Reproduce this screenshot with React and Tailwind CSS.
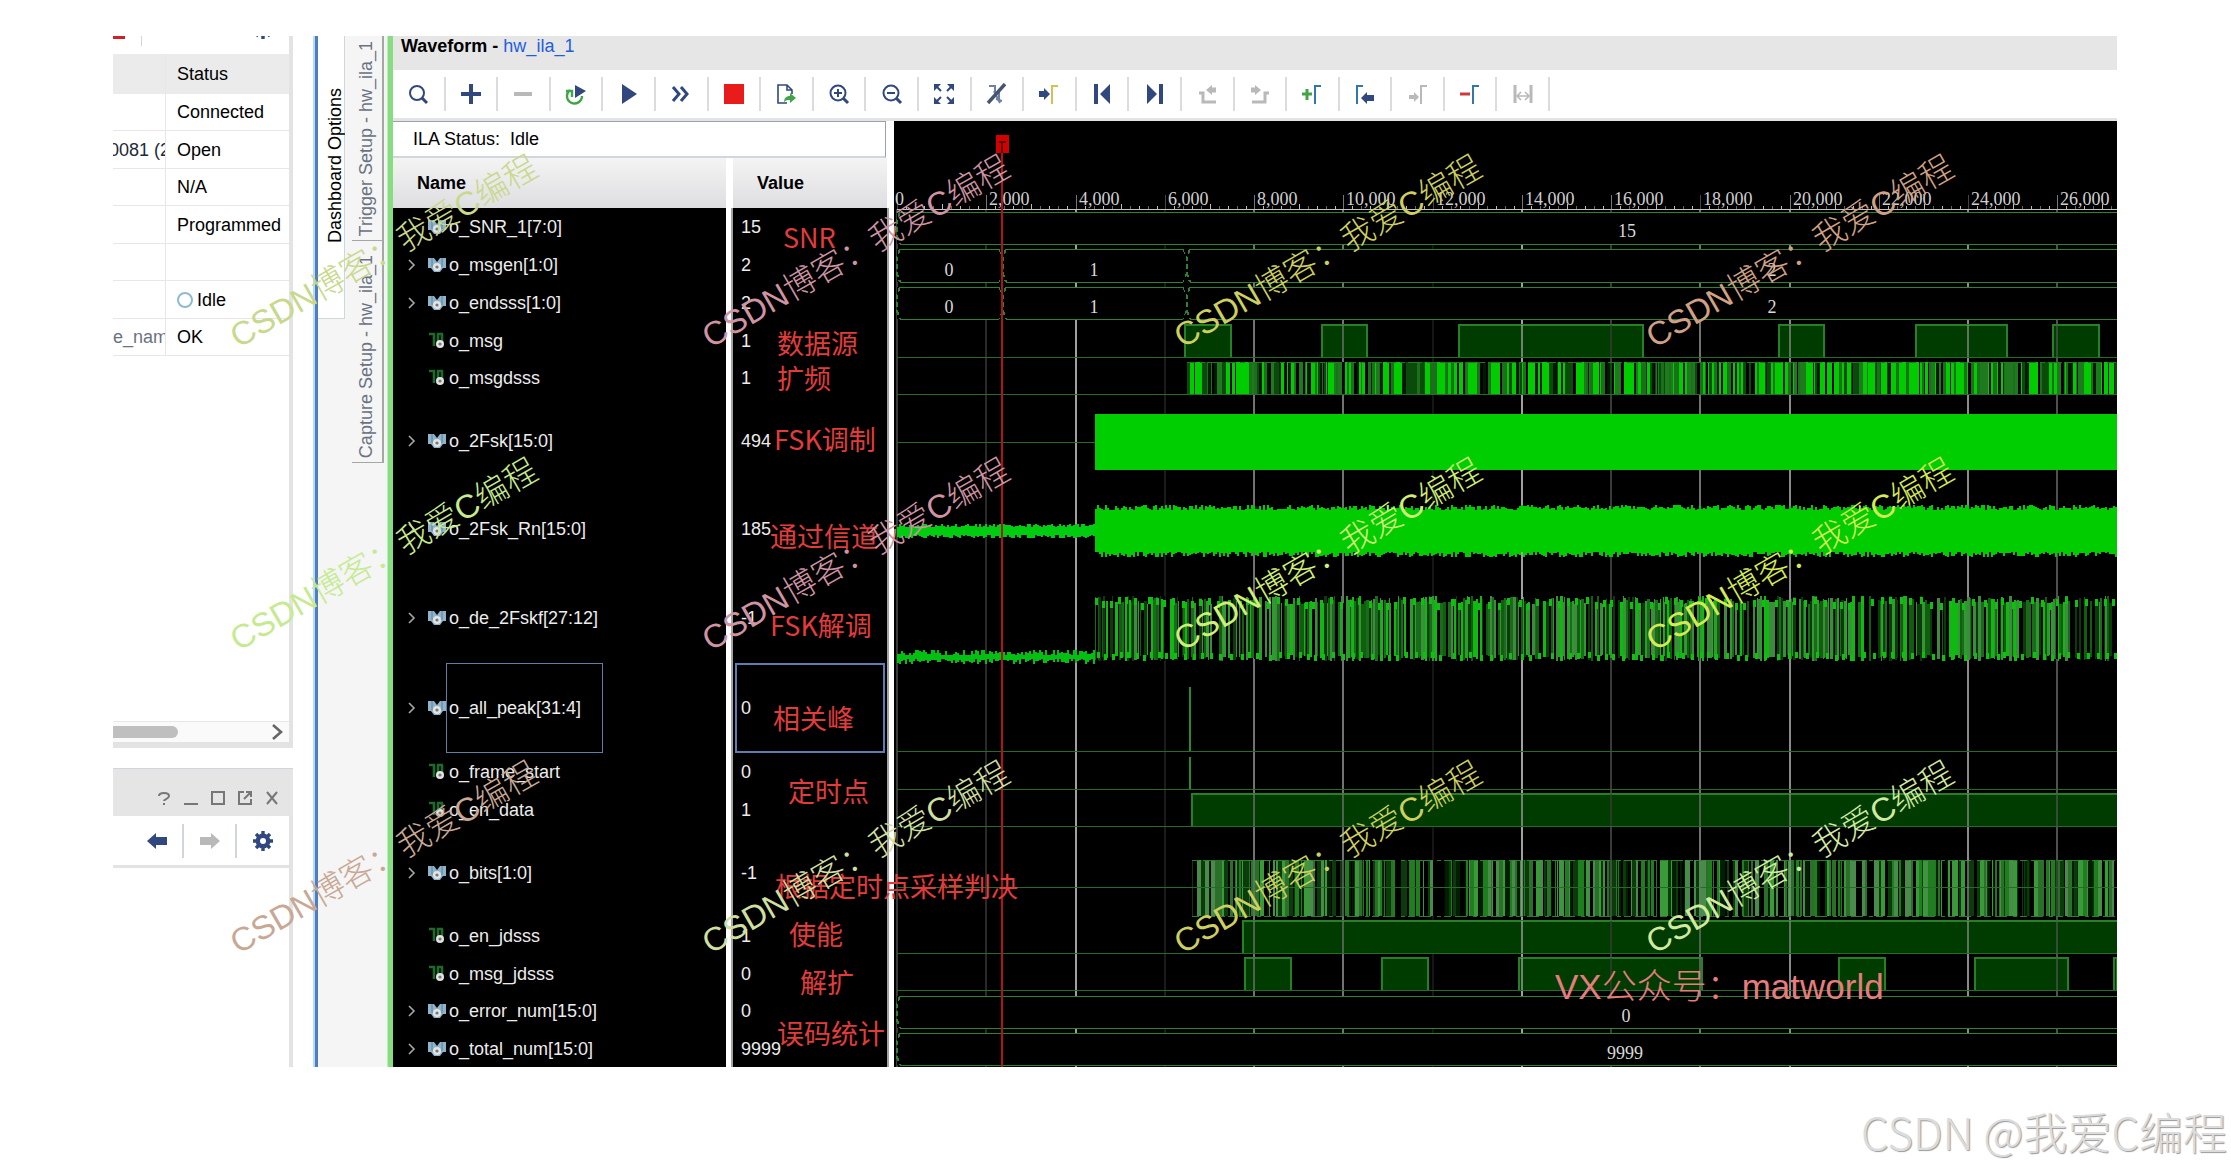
import clsx from "clsx";

const devices = [
  { name: "", status: "Connected" },
  { name: "0081 (2", status: "Open", shift: true },
  { name: "", status: "N/A" },
  { name: "", status: "Programmed" },
  { name: "", status: "" },
  { name: "", status: "Idle", ring: true },
  { name: "e_name", status: "OK" },
];

const signals = [
  { name: "o_SNR_1[7:0]", value: "15", bus: true, height: "h-[38px]" },
  { name: "o_msgen[1:0]", value: "2", bus: true, height: "h-[38px]" },
  { name: "o_endsss[1:0]", value: "2", bus: true, height: "h-[38px]" },
  { name: "o_msg", value: "1", height: "h-[37px]" },
  { name: "o_msgdsss", value: "1", height: "h-[38px]" },
  { name: "o_2Fsk[15:0]", value: "494", bus: true, height: "h-[88px]" },
  { name: "o_2Fsk_Rn[15:0]", value: "185", bus: true, height: "h-[88px]" },
  { name: "o_de_2Fskf[27:12]", value: "-1", bus: true, height: "h-[90px]" },
  { name: "o_all_peak[31:4]", value: "0", bus: true, height: "h-[90px]", selected: true },
  { name: "o_frame_start", value: "0", height: "h-[38px]" },
  { name: "o_en_data", value: "1", height: "h-[38px]" },
  { name: "o_bits[1:0]", value: "-1", bus: true, height: "h-[88px]" },
  { name: "o_en_jdsss", value: "1", height: "h-[38px]" },
  { name: "o_msg_jdsss", value: "0", height: "h-[37px]" },
  { name: "o_error_num[15:0]", value: "0", bus: true, height: "h-[38px]" },
  { name: "o_total_num[15:0]", value: "9999", bus: true, height: "h-[37px]" },
];

// left / vertical centre inside the waveform window
const notes = [
  { text: "SNR", x: 390, y: 201 },
  { text: "数据源", x: 384, y: 307 },
  { text: "扩频", x: 384, y: 342 },
  { text: "FSK调制", x: 381, y: 403 },
  { text: "通过信道", x: 377, y: 500 },
  { text: "FSK解调", x: 377, y: 589 },
  { text: "相关峰", x: 380, y: 682 },
  { text: "定时点", x: 395, y: 755 },
  { text: "根据定时点采样判决", x: 382, y: 850 },
  { text: "使能", x: 396, y: 898 },
  { text: "解扩", x: 407, y: 946 },
  { text: "误码统计", x: 384, y: 997 },
];

const marks = [
  "text-[#c8d88c]", "text-[#cf93a2]", "text-[#cdcf60]", "text-[#d0a184]",
  "text-[#c6ea90]", "text-[#cf93a2]", "text-[#d0ee78]", "text-[#d6ea55]",
  "text-[#c8a894]", "text-[#cfdfa0]", "text-[#cdcf60]", "text-[#d2eaa0]",
];

const NAVY = "#30487e";
const BLUE = "#2f78a8";
const GRAY = "#b9b9b9";
const GREEN = "#3fa548";

const Edge = ({ x = 14, color }) => (
  <path d={`M${x} 21V3h6`} fill="none" stroke={color} strokeWidth="2" />
);

const tools = [
  { label: "Search", icon: <g fill="none" stroke={NAVY} strokeWidth="2"><circle cx="10" cy="10" r="7" /><path d="M15 15l5 5" strokeWidth="3" /></g> },
  { label: "Add", icon: <path d="M11 1v20M1 11h20" stroke={NAVY} strokeWidth="4" /> },
  { label: "Remove", icon: <path d="M2 11h18" stroke={GRAY} strokeWidth="4" /> },
  { label: "Re-trigger", icon: <g><path d="M5 7a7.5 7.5 0 1 0 12 6M1 8h6v6" fill="none" stroke={GREEN} strokeWidth="2.4" /><path d="M10 2l11 6-11 7z" fill={NAVY} /></g> },
  { label: "Run trigger", icon: <path d="M4 1l15 10L4 21z" fill={NAVY} /> },
  { label: "Run immediate", icon: <path d="M3 4l6 7-6 7M11 4l6 7-6 7" fill="none" stroke={NAVY} strokeWidth="3" /> },
  { label: "Stop", icon: <path d="M1 1h20v20H1z" fill="#e91c1c" /> },
  { label: "Export", icon: <g><path d="M12 20H3V2h9l5 5v4M12 2v5h5" fill="none" stroke={NAVY} strokeWidth="1.6" /><path d="M9 20c0-5 2-7 6-7v-3l6 5-6 5v-3c-3 0-5 0-6 3z" fill={GREEN} /></g> },
  { label: "Zoom in", icon: <g fill="none" stroke={NAVY} strokeWidth="2"><circle cx="10" cy="10" r="7.5" /><path d="M6 10h8M10 6v8" /><path d="M15 15l5 5" strokeWidth="3" /></g> },
  { label: "Zoom out", icon: <g fill="none" stroke={NAVY} strokeWidth="2"><circle cx="10" cy="10" r="7.5" /><path d="M6 10h8" /><path d="M15 15l5 5" strokeWidth="3" /></g> },
  { label: "Zoom fit", icon: <g><path d="M3 3l5 5M19 3l-5 5M3 19l5-5M19 19l-5-5" stroke={NAVY} strokeWidth="2" /><path d="M1 1h7L1 8zM21 1h-7l7 7zM1 21h7l-7-7zM21 21h-7l7-7z" fill={NAVY} /></g> },
  { label: "Auto scroll", icon: <g fill="none" stroke="#47546f"><path d="M3 3h6v7M8 8l6 12M10 16l6 2M13 8v9" strokeWidth="2" stroke="#6d80a8" /><path d="M2 20L19 1" strokeWidth="3.4" /></g> },
  { label: "Go to trigger", icon: <g><path d="M1 8h5V5l6 6-6 6v-3H1z" fill={NAVY} /><Edge color="#d6bf54" /></g> },
  { label: "First", icon: <path d="M3 1h4v20H3zM19 1v20L9 11z" fill={NAVY} /> },
  { label: "Last", icon: <path d="M15 1h4v20h-4zM3 1v20l10-10z" fill={NAVY} /> },
  { label: "Previous transition", icon: <g fill="none" stroke={GRAY} strokeWidth="3"><path d="M3 10h4v9h13" /><path d="M20 7h-5" strokeWidth="5" /><path d="M16 2v10l-6-5z" fill={GRAY} stroke="none" /></g> },
  { label: "Next transition", icon: <g fill="none" stroke={GRAY} strokeWidth="3"><path d="M20 10h-4v9H3" /><path d="M2 7h5" strokeWidth="5" /><path d="M6 2v10l6-5z" fill={GRAY} stroke="none" /></g> },
  { label: "Add marker", icon: <g><path d="M6 6v11M1 11h10" stroke={GREEN} strokeWidth="3" /><Edge color={BLUE} /></g> },
  { label: "Previous marker", icon: <g><Edge x={3} color={BLUE} /><path d="M20 18h-7v3l-6-6 6-6v3h7z" fill={NAVY} /></g> },
  { label: "Next marker", icon: <g><path d="M2 12h5V9l5 5-5 5v-3H2z" fill={GRAY} /><Edge color={GRAY} /></g> },
  { label: "Remove marker", icon: <g><path d="M1 11h10" stroke="#cc3b3b" strokeWidth="3" /><Edge color={BLUE} /></g> },
  { label: "Swap markers", icon: <g stroke={GRAY} fill="none"><path d="M3 2v18M19 2v18" strokeWidth="3" /><path d="M5 13h12M9 9l-4 4 4 4M13 9l4 4-4 4" strokeWidth="1.6" /></g> },
];

const Gear = () => (
  <svg className="h-5 w-5" viewBox="0 0 20 20">
    <path d="M10 0v20M0 10h20M3 3l14 14M17 3L3 17" stroke={NAVY} strokeWidth="3.4" />
    <circle cx="10" cy="10" r="7.4" fill={NAVY} />
    <circle cx="10" cy="10" r="3" fill="#fff" />
  </svg>
);

const SignalIcon = ({ bus }) => (
  <svg className="h-[18px] w-[18px] shrink-0" viewBox="0 0 18 18">
    {bus ? (
      <g>
        <path d="M0 2h6l3 4 3-4h6v10h-3l-3 4H6l-3-4H0z" fill="#8fb3cb" />
        <path d="M4 2v9M14 2v9" stroke="#5d8196" strokeWidth="1" />
        <circle cx="9" cy="11" r="4" fill="#e4e4e4" />
        <circle cx="9" cy="11" r="1.6" fill="#777" />
      </g>
    ) : (
      <g>
        <path d="M1 2h5v12M9 2h6M10 2v8M14 2v8" stroke="#1d6b2c" strokeWidth="2.6" fill="none" />
        <circle cx="12" cy="12" r="4" fill="#e4e4e4" />
        <circle cx="12" cy="12" r="1.6" fill="#777" />
      </g>
    )}
  </svg>
);

function HardwarePanel() {
  return (
    <section className="flex h-[712px] flex-col border-r-4 border-b-[6px] border-[#e3e3e3] bg-white">
      <div className="flex h-[18px] items-start overflow-hidden">
        <span className="h-[3px] w-3 bg-[#cf2027]" />
        <span className="ml-4 h-2.5 w-px bg-gray-300" />
        <span className="ml-auto mr-4 flex h-[3px] items-end overflow-hidden"><Gear /></span>
      </div>
      <table className="w-full table-fixed border-separate border-spacing-0 text-left text-[18px] leading-5">
        <thead>
          <tr className="h-10 bg-[#ebebeb]">
            <th className="w-[53px] border-r border-gray-200" aria-label="Name" />
            <th className="pl-[11px] font-normal">Status</th>
          </tr>
        </thead>
        <tbody>
          {devices.map((d, i) => (
            <tr key={i} className={i % 2 ? "h-[38px]" : "h-[37px]"}>
              <td className={clsx("overflow-hidden whitespace-nowrap border-r border-b border-gray-200 p-0", i === 6 ? "text-gray-500" : "text-gray-800")}>
                <span className={clsx("block", d.shift && "-ml-1")}>{d.name}</span>
              </td>
              <td className="whitespace-nowrap border-b border-gray-200 p-0 pl-[11px]">
                <span className="flex items-center gap-1">
                  {d.ring && <span className="h-4 w-4 rounded-full border-2 border-[#8fbccb]" />}
                  {d.status}
                </span>
              </td>
            </tr>
          ))}
        </tbody>
      </table>
      <div className="mt-auto flex h-[21px] items-center border-t border-gray-200 bg-[#fafafa]">
        <span className="h-3 w-[65px] rounded-r-full bg-[#bfbfbf]" />
        <svg className="ml-auto mr-1.5 h-4 w-3" viewBox="0 0 12 16">
          <path d="M2 1l8 7-8 7" fill="none" stroke="#666" strokeWidth="2.6" />
        </svg>
      </div>
    </section>
  );
}

function PropertiesPanel() {
  return (
    <section className="flex flex-1 flex-col border-r-4 border-[#e3e3e3] bg-white">
      <div className="-mr-1 flex h-12 items-center justify-end gap-[13px] border-t border-gray-300 bg-[#e5e5e5] pt-2.5 pr-3.5">
        {[
          ["Help", <path d="M2 5c0-4 10-4 10 0 0 3-5 3-5 5M7 12v2" />],
          ["Minimize", <path d="M0 13h14" />],
          ["Maximize", <path d="M1 1h12v12H1z" />],
          ["Float", <path d="M6 1H1v12h12V8M8 1h5v5M13 1L6 8" />],
          ["Close", <path d="M2 1l10 12M12 1L2 13" />],
        ].map(([label, shape]) => (
          <button key={label} aria-label={label}>
            <svg className="h-3.5 w-3.5" viewBox="0 0 14 14" fill="none" stroke="#777" strokeWidth="2">{shape}</svg>
          </button>
        ))}
      </div>
      <div className="flex h-[52px] items-center justify-end border-b-[3px] border-[#e3e3e3]">
        <button aria-label="Back" className="flex h-[34px] w-[53px] items-center justify-center border-r-2 border-gray-300">
          <svg className="h-5 w-5" viewBox="0 0 20 20"><path d="M0 10l9-8v4h11v8H9v4z" fill={NAVY} /></svg>
        </button>
        <button aria-label="Forward" className="flex h-[34px] w-[53px] items-center justify-center border-r-2 border-gray-300">
          <svg className="h-5 w-5" viewBox="0 0 20 20"><path d="M20 10l-9-8v4H0v8h11v4z" fill={GRAY} /></svg>
        </button>
        <button aria-label="Settings" className="flex w-[52px] items-center justify-center"><Gear /></button>
      </div>
    </section>
  );
}

function SideTabs() {
  return (
    <nav className="flex w-[78px] shrink-0 items-start border-l-[3px] border-[#4f7dbd] bg-[#f5f5f5] text-[18px] leading-5 shadow-[-2px_0_0_#b5dcf5]">
      <button className="flex h-[283px] w-[27px] items-end justify-center border-r border-b border-gray-300 bg-white pb-[75px] pl-2">
        <span className="rotate-180 whitespace-nowrap [writing-mode:vertical-rl]">Dashboard Options</span>
      </button>
      <div className="ml-[7px] flex w-8 flex-col border-r-2 border-[#a6a6a6] text-gray-500">
        <button className="flex h-[205px] items-end justify-center overflow-hidden border-b border-[#a6a6a6] pb-1 pr-0.5">
          <span className="rotate-180 whitespace-nowrap [writing-mode:vertical-rl]">Trigger Setup - hw_ila_1</span>
        </button>
        <button className="flex h-[222px] items-end justify-center border-b border-[#a6a6a6] pb-1 pr-0.5">
          <span className="rotate-180 whitespace-nowrap [writing-mode:vertical-rl]">Capture Setup - hw_ila_1</span>
        </button>
      </div>
      <div className="ml-auto w-1.5 self-stretch border-l border-[#b9efb5] bg-[#86dd82]" />
    </nav>
  );
}

function SignalTable() {
  return (
    <div className="w-[501px] shrink-0 bg-white pr-[5px] text-[18px] leading-5">
      <div className="mr-[3px] flex h-[37px] items-center border-t border-r border-b-2 border-gray-400 border-b-gray-300 pl-5 whitespace-pre">ILA Status:  Idle</div>
      <table className="w-full table-fixed border-separate border-spacing-0 text-left">
        <thead>
          <tr className="h-[50px] bg-linear-to-b from-[#f4f4f4] to-[#dedee1]">
            <th className="w-[338px] border-r-[5px] border-white p-0 pl-6 font-bold">Name</th>
            <th className="border-x-2 border-white p-0 pl-6 font-bold">Value</th>
          </tr>
        </thead>
        <tbody className="bg-black text-[#ececec]">
          {signals.map((s, i) => (
            <tr key={s.name} className={s.height}>
              <td className="border-r-[5px] border-white p-0">
                <div className="flex h-full items-center pl-3.5">
                  <span className="flex w-[21px] shrink-0">
                    {s.bus && i > 0 && (
                      <svg className="h-3 w-2.5" viewBox="0 0 10 12">
                        <path d="M2 1l5 5-5 5" fill="none" stroke="#a8a8a8" strokeWidth="1.6" />
                      </svg>
                    )}
                  </span>
                  <SignalIcon bus={s.bus} />
                  <span className={clsx("flex items-center px-0.5", s.selected ? "h-[90px] w-[157px] border border-[#5f7ea8]" : "border border-transparent")}>
                    {s.name}
                  </span>
                </div>
              </td>
              <td className="border-x-2 border-[#a3a3a3] p-0 px-0.5">
                <div className={clsx("flex items-center border-2 pl-1", s.selected ? "h-[90px] border-[#5b7fb4]" : "border-transparent")}>
                  {s.value}
                </div>
              </td>
            </tr>
          ))}
        </tbody>
      </table>
    </div>
  );
}

// small deterministic generator so that the traces look the same on each render
function rng(seed) {
  let s = seed;
  return () => {
    s = (s * 1664525 + 1013904223) % 4294967296;
    return s / 4294967296;
  };
}

const END = 1223;

function band(seed, from, to, mid, low, high) {
  const r = rng(seed);
  let d = "";
  for (let x = from; x < to; x += 2) {
    const a = low + Math.floor(r() * (high - low));
    const b = low + Math.floor(r() * (high - low));
    d += `M${x} ${mid - a}h2V${mid + b}h-2z`;
  }
  return d;
}

function stripes(seed, from, colors, widths) {
  const r = rng(seed);
  const out = [];
  let x = from;
  while (x < END) {
    const w = widths[Math.floor(r() * widths.length)];
    out.push({ x, w: Math.min(w, END - x), color: colors[Math.floor(r() * colors.length)], k: r() });
    x += w;
  }
  return out;
}

// chip stream: solid runs split by narrow gaps
const spread = stripes(7, 293, ["#00cc00", "#00cc00", "#00cc00", "#1f7a1f", "#0a4a0a"], [3, 4, 6, 8]);
const spreadGaps = stripes(11, 299, ["#000", "#1c701c", "#001a00"], [1, 2, 2, 3]).filter((b) => b.k > 0.6);
const demod = stripes(21, 201, ["#2f9a2f", "#1c6a1c", "#0b3a0b", "#000", "#12b812", "#3f8a3f", "#000", "#0f5f0f"], [1, 1, 2, 2, 3]);
const bits = stripes(33, 298, ["#3a9a3a", "#2b6f2b", "#0b3a0b", "#000", "#000", "#1f7f1f", "#4a8a4a", "#001f00"], [1, 1, 2, 2, 3, 4]);
const ticks = Array.from({ length: 14 }, (_, n) => 3 + Math.round(n * 89.25));
const tickColors = ["#3a3a3a", "#2a2a2a", "#a0a0a0", "#1c1c1c", "#727272", "#727272", "#161616", "#a0a0a0", "#3a3a3a", "#727272", "#8a8a8a", "#000", "#8a8a8a", "#505050"];
const strongTicks = [4, 5, 7, 8, 9, 10, 12, 13];

const msgPulses = [[291, 46], [428, 45], [565, 184], [885, 45], [1022, 91], [1159, 46]];
const jdPulses = [[351, 46], [488, 46], [625, 183], [945, 46], [1081, 93], [1220, 3]];

const Bus = ({ y, h = 32, cuts = [] }) => {
  const starts = [3, ...cuts];
  return (
    <g>
      <rect x="3" y={y} width="100%" height={h} fill="#000" />
      {starts.map((x, i) => {
        const end = i < cuts.length ? cuts[i] - 4 : 6000;
        return (
          <g key={x} fill="none" stroke="#2e8232">
            <path d={`M${x + 3} ${y}H${end}M${x + 3} ${y + h}H${end}`} />
            <path d={`M${x + 3} ${y}L${x} ${y + 8}V${y + h - 8}L${x + 3} ${y + h}`} strokeWidth="2" strokeDasharray="5 3" />
            {i < cuts.length && <path d={`M${end} ${y}l3 8v${h - 16}l-3 8`} strokeDasharray="5 3" />}
          </g>
        );
      })}
    </g>
  );
};

const Pulses = ({ list, y, h }) => list.map(([x, w]) => (
  <g key={x}>
    <rect x={x} y={y} width={w} height={h} fill="#003c00" />
    <path d={`M${x} ${y + h}V${y}h${w}v${h}`} fill="none" stroke="#278027" strokeWidth="2" />
  </g>
));

const Low = ({ y, to = "100%" }) => <line x1="3" x2={to} y1={y} y2={y} stroke="#276b29" />;

function WaveCanvas() {
  return (
    <svg className="h-[946px] min-w-0 flex-1 bg-black font-['Liberation_Serif',serif] text-[18px]" shapeRendering="crispEdges">
      {ticks.map((x, n) => (
        <g key={x}>
          <line x1={x} x2={x} y1="88" y2="946" stroke={tickColors[n]} strokeWidth="2" />
          <line x1={x} x2={x} y1="74" y2="88" stroke={n % 3 ? "#777" : "#444"} />
          {[1, 2, 3, 4, 5, 6, 7, 8, 9].map((m) => (
            <line key={m} x1={x + m * 9} x2={x + m * 9} y1={m === 5 ? 83 : 85} y2="88" stroke={m % 2 ? "#bbb" : "#666"} />
          ))}
        </g>
      ))}
      <line x1="3" x2="100%" y1="88" y2="88" stroke="#c4c4c4" />

      <Pulses list={msgPulses} y={204} h={32} />
      <Low y={236} />
      <Low y={273} />
      {spread.map((b) => <rect key={b.x} x={b.x} y="241" width={b.w} height="32" fill={b.color} />)}
      {spreadGaps.map((b) => <rect key={b.x} x={b.x} y="241" width={b.w} height="32" fill={b.color} />)}
      <path d="M293 241H1223" stroke="#1d7d1d" strokeDasharray="9 4 5 3 14 5" />

      <Low y={321} to="201" />
      <rect x="201" y="293" width={END - 201} height="56" fill="#00ce00" />

      <path d={band(3, 3, 201, 410, 4, 8)} fill="#00cc10" />
      <path d={band(9, 201, END, 410, 21, 27)} fill="#00cc00" />

      <path d={band(5, 3, 201, 536, 2, 8)} fill="#00c010" />
      {demod.map((b) => {
        const top = 475 + Math.floor(b.k * 9);
        return <rect key={b.x} x={b.x} y={top} width={b.w} height={540 - top - Math.floor(b.k * 7)} fill={b.color} />;
      })}
      {demod.filter((b, i) => i % 5 === 0).map((b) => (
        <g key={b.x} fill="#10bf10">
          <rect x={b.x} y={476 + Math.floor(b.k * 7)} width="3" height="7" />
          <rect x={b.x + 2} y={531 + Math.floor(b.k * 4)} width="3" height="6" />
        </g>
      ))}

      <Low y={630} />
      <path d="M296 566v64M296 636v32" stroke="#2b8a2b" strokeWidth="2" />
      <Low y={668} />

      <rect x="298" y="673" width={END - 298} height="32" fill="#003c00" />
      <path d="M298 705V673H1223" fill="none" stroke="#278027" strokeWidth="2" />
      <Low y={705} />

      {bits.map((b) => <rect key={b.x} x={b.x} y="739" width={b.w} height="56" fill={b.color} />)}
      <path d="M298 739H1223M298 795H1223" stroke="#2b7f2b" strokeDasharray="7 4 12 6 4 3" />
      <Low y={766} />

      <rect x="349" y="800" width={END - 349} height="32" fill="#003c00" />
      <path d="M349 832V800H1223" fill="none" stroke="#278027" strokeWidth="2" />
      <Low y={832} />
      <Pulses list={jdPulses} y={837} h={32} />
      <Low y={869} />

      {/* graticule shows through the filled pulses */}
      {strongTicks.map((n) => (
        <path key={n} d={`M${ticks[n]} 204v32M${ticks[n]} 673v32M${ticks[n]} 739v56M${ticks[n]} 800v32M${ticks[n]} 837v32`} stroke={tickColors[n]} strokeWidth="2" opacity="0.7" />
      ))}

      <Bus y={91} />
      <Bus y={128} h={33} cuts={[109, 293]} />
      <Bus y={166} cuts={[109, 293]} />
      <Bus y={875} />
      <Bus y={912} />

      <g fill="#d0d0d0">
        {ticks.map((x, n) => (
          <text key={x} x={n ? x + 3 : 1} y="84">{(n * 2000).toLocaleString("en-US")}</text>
        ))}
      </g>
      <g fill="#d8d8d8" textAnchor="middle">
        <text x="733" y="116">15</text>
        <text x="55" y="155">0</text>
        <text x="200" y="155">1</text>
        <text x="878" y="155">2</text>
        <text x="55" y="192">0</text>
        <text x="200" y="192">1</text>
        <text x="878" y="192">2</text>
        <text x="732" y="901">0</text>
        <text x="731" y="938">9999</text>
      </g>

      <line x1="108" x2="108" y1="32" y2="946" stroke="#b01414" strokeWidth="2" />
      <rect x="102" y="14" width="13" height="18" fill="#d40000" />
      <path d="M105 21h7M108 21v11" stroke="#500" strokeWidth="2" />
    </svg>
  );
}

function WaveformWindow() {
  return (
    <main className="relative min-w-0 flex-1">
      <header className="h-[34px] bg-[#e6e6e6] pl-2 text-[18px] leading-5">
        <h1 className="inline font-bold">Waveform - </h1>
        <a href="#hw_ila_1" className="text-[#1f5fdc]">hw_ila_1</a>
      </header>
      <div className="h-[51px] border-b-[3px] border-[#e3e3e3] bg-white">
        <div className="flex h-full max-w-[1157px] items-center">
          {tools.map((t) => (
            <button key={t.label} aria-label={t.label} className="flex h-[34px] flex-1 items-center justify-center border-r-2 border-[#dcdcdc]">
              <svg className="h-[22px] w-[22px]" viewBox="0 0 22 22">{t.icon}</svg>
            </button>
          ))}
        </div>
      </div>
      <div className="flex items-start">
        <SignalTable />
        <WaveCanvas />
      </div>
      {notes.map((n) => (
        <span
          key={n.text}
          className="absolute -translate-y-1/2 whitespace-nowrap font-['Noto_Sans_CJK_SC',sans-serif] text-[27px] leading-8 text-[#e03c3c]"
          style={{ left: n.x, top: n.y }}
        >
          {n.text}
        </span>
      ))}
      <span className="absolute top-[931px] left-[1162px] whitespace-nowrap font-['Liberation_Sans','Noto_Sans_CJK_SC',sans-serif] text-[35px] leading-10 font-light text-[#e67c7c]">
        VX公众号：matworld
      </span>
    </main>
  );
}

export default function App() {
  return (
    <div className="relative min-h-screen overflow-hidden bg-white pt-9 pr-[114px] pb-[102px] pl-[113px] font-['Liberation_Sans',Arial,sans-serif] text-black">
      <div className="relative flex">
        <aside className="mr-[22px] flex w-[180px] shrink-0 flex-col gap-5">
          <HardwarePanel />
          <PropertiesPanel />
        </aside>
        <SideTabs />
        <WaveformWindow />

        <div className="pointer-events-none absolute top-0 left-[120px] grid grid-cols-[repeat(4,472px)] auto-rows-[303px]">
          {marks.map((color, i) => (
            <div key={i} className="flex items-end">
              <span className={clsx("origin-left -rotate-30 whitespace-nowrap font-['Liberation_Sans','Noto_Sans_CJK_SC_Light','Noto_Sans_CJK_SC',sans-serif] text-[33px] leading-0 font-light", color)}>
                CSDN博客：我爱C编程
              </span>
            </div>
          ))}
        </div>
      </div>
      <div className="absolute right-1 bottom-3 whitespace-nowrap font-['Noto_Sans_CJK_SC',sans-serif] text-[44px] leading-[52px] font-light text-[#dcdcdc] [text-shadow:1px_1px_1px_#999]">
        CSDN @我爱C编程
      </div>
    </div>
  );
}
